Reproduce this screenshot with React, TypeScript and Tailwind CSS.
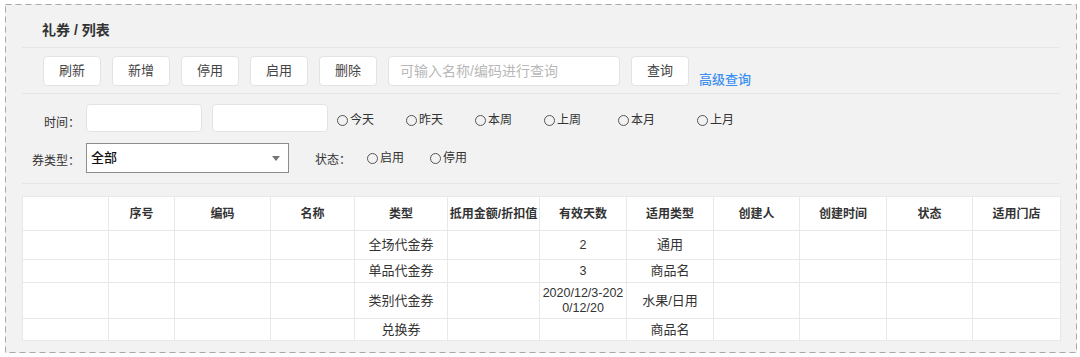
import React from 'react';

const FONT = '"Liberation Sans", "Noto Sans CJK SC", sans-serif';

const Radio = ({ label, className }: { label: string; className: string }) => (
  <label className={className}>
    <span className="flex items-center text-[12px] leading-[18px] text-[#333]">
      <span className="w-[11px] h-[11px] rounded-full border border-[#555] mr-[2px]" />
      {label}
    </span>
  </label>
);

const Btn = ({ children }: { children: React.ReactNode }) => (
  <button className="w-[58px] h-[30px] flex-none bg-white border border-[#e3e3e3] rounded-[4px] text-[13px] text-[#444]">
    {children}
  </button>
);

const cols = [
  'w-[86px]', 'w-[66px]', 'w-[96px]', 'w-[84px]', 'w-[93px]', 'w-[92px]',
  'w-[87px]', 'w-[87px]', 'w-[86px]', 'w-[87px]', 'w-[86px]', 'w-[88px]',
];

const headers = ['', '序号', '编码', '名称', '类型', '抵用金额/折扣值', '有效天数', '适用类型', '创建人', '创建时间', '状态', '适用门店'];

const rows: { h: string; type: string; days: React.ReactNode; scope: string }[] = [
  { h: 'h-[29px]', type: '全场代金券', days: '2', scope: '通用' },
  { h: 'h-[23px]', type: '单品代金券', days: '3', scope: '商品名' },
  { h: 'h-[36px]', type: '类别代金券', days: <>2020/12/3-202<br />0/12/20</>, scope: '水果/日用' },
  { h: 'h-[22px]', type: '兑换券', days: '', scope: '商品名' },
];

export default function App() {
  return (
    <div className="w-[1080px] h-[357px] bg-white pt-[4px] pl-[5px]" style={{ fontFamily: FONT }}>
      <div className="relative w-[1072px] h-[349px] bg-[#f2f2f2] px-[17px]">
        <svg className="absolute inset-0 pointer-events-none" width="1072" height="349">
          <rect x="0.5" y="0.5" width="1071" height="348" fill="none" stroke="#a9a9a9" strokeDasharray="6 4" />
        </svg>

        <div className="h-[44px] pt-[9px] flex items-center pl-[20px] border-b border-[#e6e6e6]">
          <span className="text-[14px] font-semibold text-[#333] leading-[18px]">礼券 / 列表</span>
        </div>

        <div className="h-[46px] flex items-center pl-[21px] gap-[11px] border-b border-[#e6e6e6]">
          <Btn>刷新</Btn>
          <Btn>新增</Btn>
          <Btn>停用</Btn>
          <Btn>启用</Btn>
          <Btn>删除</Btn>
          <input
            placeholder="可输入名称/编码进行查询"
            className="w-[232px] h-[30px] bg-white border border-[#e3e3e3] rounded-[4px] px-[11px] text-[14px] placeholder:text-[#b8b8b8] outline-none"
          />
          <Btn>查询</Btn>
          <span className="self-end mb-[4px] -ml-[1px] text-[13px] leading-[18px] font-medium text-[#3b8ff0]">高级查询</span>
        </div>

        <div className="h-[90px] pt-[10px] border-b border-[#e6e6e6]">
          <div className="flex items-start">
            <span className="w-[58px] pt-[10px] text-right text-[12px] leading-[18px] text-[#333]">时间：</span>
            <input className="ml-[6px] w-[116px] h-[28px] bg-white border border-[#e3e3e3] rounded-[4px]" />
            <input className="ml-[10px] w-[116px] h-[28px] bg-white border border-[#e3e3e3] rounded-[4px]" />
            <Radio label="今天" className="ml-[9px] w-[69px] pt-[7px]" />
            <Radio label="昨天" className="w-[69px] pt-[7px]" />
            <Radio label="本周" className="w-[69px] pt-[7px]" />
            <Radio label="上周" className="w-[74px] pt-[7px]" />
            <Radio label="本月" className="w-[79px] pt-[7px]" />
            <Radio label="上月" className="pt-[7px]" />
          </div>
          <div className="flex items-start mt-[11px]">
            <span className="w-[58px] pt-[9px] text-right text-[12px] leading-[18px] text-[#333]">券类型：</span>
            <div className="ml-[6px] w-[203px] h-[30px] bg-white border border-[#8c8c8c] flex items-center justify-between pl-[4px] pr-[8px]">
              <span className="text-[13px] font-medium text-[#111]">全部</span>
              <svg width="8" height="5" viewBox="0 0 8 5">
                <path d="M0 0 L8 0 L4 5 Z" fill="#777" />
              </svg>
            </div>
            <span className="ml-[26px] w-[36px] pt-[8px] text-[12px] leading-[18px] text-[#333]">状态：</span>
            <Radio label="启用" className="ml-[16px] w-[63px] pt-[6px]" />
            <Radio label="停用" className="pt-[6px]" />
          </div>
        </div>

        <table className="mt-[12px] w-[1038px] table-fixed border-collapse bg-white text-[#333]">
          <colgroup>
            {cols.map((c, i) => (
              <col key={i} className={c} />
            ))}
          </colgroup>
          <thead>
            <tr className="h-[34px]">
              {headers.map((h, i) => (
                <th key={i} className="border border-[#e8e8e8] text-[12px] font-semibold p-0">{h}</th>
              ))}
            </tr>
          </thead>
          <tbody>
            {rows.map((r, i) => (
              <tr key={i} className={r.h}>
                <td className="border border-[#e8e8e8]" />
                <td className="border border-[#e8e8e8]" />
                <td className="border border-[#e8e8e8]" />
                <td className="border border-[#e8e8e8]" />
                <td className="border border-[#e8e8e8] text-center text-[13px] p-0">{r.type}</td>
                <td className="border border-[#e8e8e8]" />
                <td className="border border-[#e8e8e8] text-center text-[12.5px] leading-[15px] p-0">{r.days}</td>
                <td className="border border-[#e8e8e8] text-center text-[13px] p-0">{r.scope}</td>
                <td className="border border-[#e8e8e8]" />
                <td className="border border-[#e8e8e8]" />
                <td className="border border-[#e8e8e8]" />
                <td className="border border-[#e8e8e8]" />
              </tr>
            ))}
          </tbody>
        </table>
      </div>
    </div>
  );
}
